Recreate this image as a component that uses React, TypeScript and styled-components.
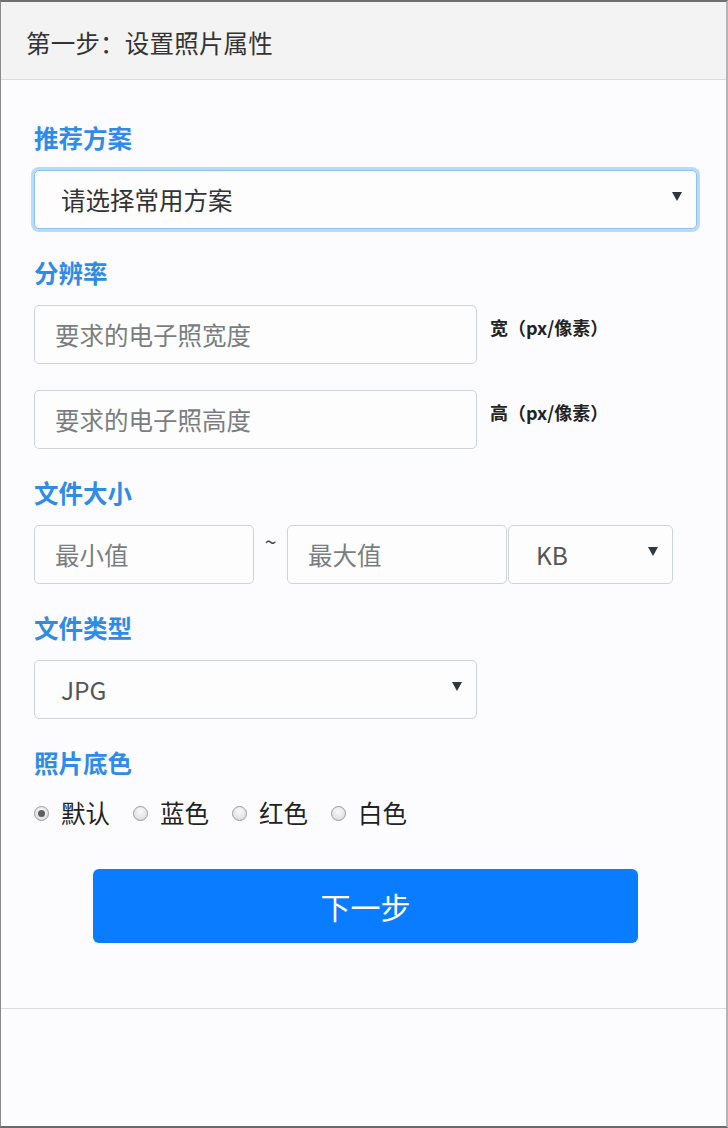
import React from "react";
import styled, { createGlobalStyle } from "styled-components";

const Global = createGlobalStyle`
  html, body { margin: 0; padding: 0; background: #fcfcfd; }
  * { box-sizing: border-box; }
  body { font-family: "Noto Sans CJK SC", "Noto Sans", sans-serif; }
`;

const Frame = styled.div`
  height: 1128px;
  display: flex;
  flex-direction: column;
  border-top: 2px solid #6f6f72;
  border-bottom: 2px solid #6a6a6d;
  border-left: 1px solid #8a8a8d;
  border-right: 2px solid #b4b4b8;
  background: #fcfcfe;
`;

const Header = styled.div`
  height: 78px;
  flex: none;
  display: flex;
  align-items: center;
  padding-left: 25px;
  padding-top: 4px;
  background: #f3f3f4;
  border-bottom: 1px solid #dcdcde;
  font-size: 24.5px;
  color: #333;
  letter-spacing: 0.2px;
`;

const Body = styled.div`
  flex: none;
  padding: 43px 29px 65px 33px;
  border-bottom: 1px solid #dcdcde;
  display: flex;
  flex-direction: column;
`;

const Footer = styled.div`
  flex: 1;
`;

const Group = styled.div<{ $mb?: number }>`
  display: flex;
  flex-direction: column;
  margin-bottom: ${(p) => p.$mb ?? 29}px;
`;

const Label = styled.div`
  font-size: 24.5px;
  line-height: 30px;
  font-weight: 600;
  color: #2f8ce6;
  margin-bottom: 17px;
`;

const Row = styled.div<{ $gap?: number; $mt?: number }>`
  display: flex;
  align-items: flex-start;
  gap: ${(p) => p.$gap ?? 0}px;
  margin-top: ${(p) => p.$mt ?? 0}px;
`;

const Input = styled.input<{ $w: number }>`
  width: ${(p) => p.$w}px;
  height: 59px;
  border: 1px solid #ced3d8;
  border-radius: 5px;
  background: #fdfdfe;
  padding: 0 0 0 20px;
  font-family: inherit;
  font-size: 24.5px;
  color: #333;
  outline: none;
  &::placeholder { color: #7a7d80; }
`;

const SelectBox = styled.div<{ $w?: number; $focus?: boolean; $pad?: number }>`
  width: ${(p) => (p.$w ? `${p.$w}px` : "100%")};
  height: 59px;
  display: flex;
  align-items: center;
  justify-content: space-between;
  padding: 0 14px 0 ${(p) => p.$pad ?? 26}px;
  border: 1px solid ${(p) => (p.$focus ? "#8cc3f8" : "#ced3d8")};
  border-radius: 5px;
  background: #fdfdfe;
  box-shadow: ${(p) => (p.$focus ? "0 0 0 3px #b9dafb" : "none")};
  font-size: 24.5px;
  color: ${(p) => (p.$focus ? "#333" : "#555")};
`;

const Caret = styled.span`
  width: 0;
  height: 0;
  border-left: 5px solid transparent;
  border-right: 5px solid transparent;
  border-top: 9px solid #2f3640;
  margin-bottom: 6px;
`;

const UnitText = styled.div`
  margin-top: 10px;
  font-size: 18px;
  line-height: 24px;
  font-weight: 700;
  color: #222;
  white-space: nowrap;
`;

const Tilde = styled.div`
  width: 33px;
  text-align: center;
  font-size: 21px;
  line-height: 20px;
  margin-top: 6px;
  color: #444;
`;

const RadioRow = styled.div`
  display: flex;
  align-items: center;
  height: 34px;
  gap: 23px;
`;

const RadioItem = styled.label`
  display: flex;
  align-items: center;
  gap: 12px;
  font-size: 24.5px;
  color: #222;
`;

const RadioDot = styled.span<{ $on?: boolean }>`
  width: 15px;
  height: 15px;
  border-radius: 50%;
  border: 1px solid #999a9c;
  background: radial-gradient(circle at 50% 35%, #fafafa 0%, #d6d6d9 100%);
  display: flex;
  align-items: center;
  justify-content: center;
  margin-top: 2px;
  &::after {
    content: "";
    display: ${(p) => (p.$on ? "block" : "none")};
    width: 7px;
    height: 7px;
    border-radius: 50%;
    background: #5d5d60;
  }
`;

const Button = styled.button`
  align-self: center;
  width: 545px;
  height: 74px;
  border: none;
  border-radius: 6px;
  background: #0a7cff;
  color: #fff;
  font-family: inherit;
  font-size: 30px;
  cursor: pointer;
`;

export default function App() {
  return (
    <>
      <Global />
      <Frame>
        <Header>第一步：设置照片属性</Header>
        <Body>
          <Group>
            <Label>推荐方案</Label>
            <SelectBox $focus>
              <span>请选择常用方案</span>
              <Caret />
            </SelectBox>
          </Group>
          <Group>
            <Label>分辨率</Label>
            <Row $gap={13}>
              <Input $w={443} placeholder="要求的电子照宽度" />
              <UnitText>宽（px/像素）</UnitText>
            </Row>
            <Row $gap={13} $mt={26}>
              <Input $w={443} placeholder="要求的电子照高度" />
              <UnitText>高（px/像素）</UnitText>
            </Row>
          </Group>
          <Group>
            <Label>文件大小</Label>
            <Row>
              <Input $w={220} placeholder="最小值" />
              <Tilde>~</Tilde>
              <Input $w={220} placeholder="最大值" />
              <SelectBox $w={165} $pad={27} style={{ marginLeft: 1 }}>
                <span>KB</span>
                <Caret />
              </SelectBox>
            </Row>
          </Group>
          <Group>
            <Label>文件类型</Label>
            <SelectBox $w={443}>
              <span>JPG</span>
              <Caret />
            </SelectBox>
          </Group>
          <Group $mb={40}>
            <Label>照片底色</Label>
            <RadioRow>
              <RadioItem><RadioDot $on />默认</RadioItem>
              <RadioItem><RadioDot />蓝色</RadioItem>
              <RadioItem><RadioDot />红色</RadioItem>
              <RadioItem><RadioDot />白色</RadioItem>
            </RadioRow>
          </Group>
          <Button>下一步</Button>
        </Body>
        <Footer />
      </Frame>
    </>
  );
}
